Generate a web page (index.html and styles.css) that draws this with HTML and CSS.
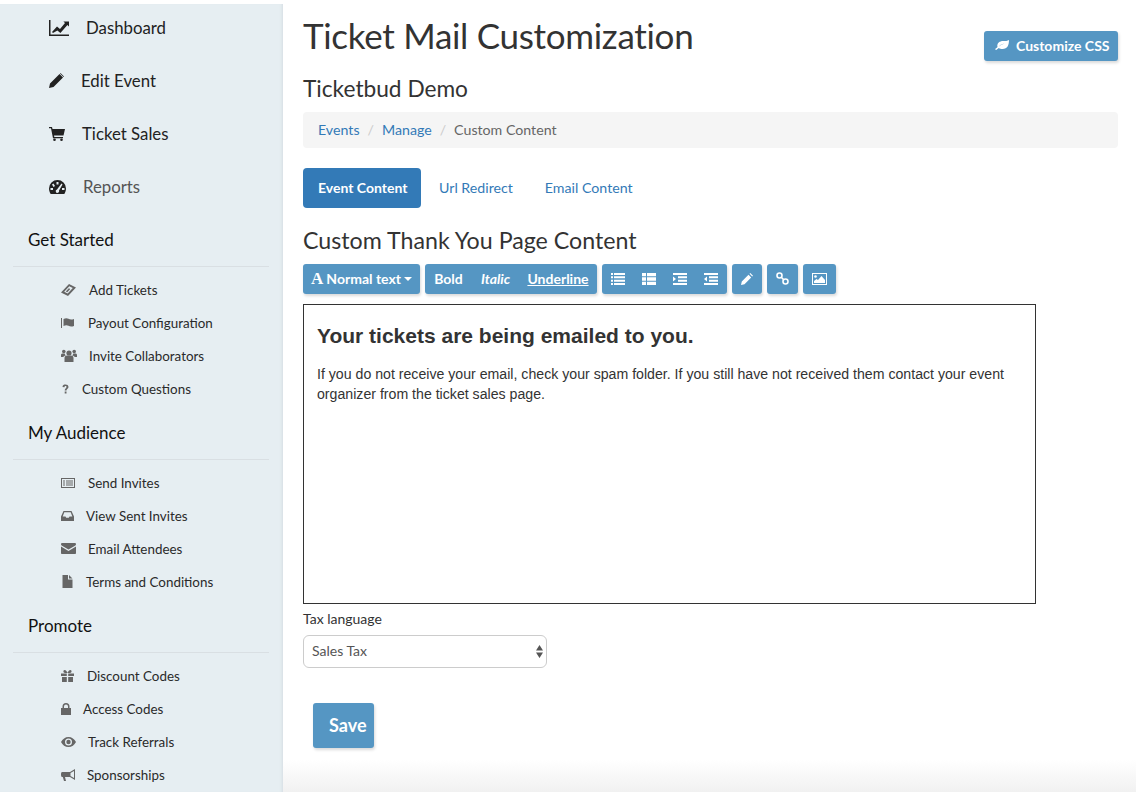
FILE: index.html
```html
<!DOCTYPE html>
<html lang="en">
<head>
<meta charset="utf-8">
<title>Ticket Mail Customization</title>
<link rel="stylesheet" href="styles.css">
</head>
<body>
<div class="page">
  <aside class="sidebar">
    <nav class="main-nav">
      <a class="main-item"><svg class="ico" width="20" height="16" viewBox="0 0 20 16"><path d="M0 0h1.500v14.500H20V16H0z"/><path d="M3 12l5-5.500 3 2.500 5-6-1.600-1.500H20v5l-1.600-1.600-7 8-3-2.500L4 13z"/></svg><span>Dashboard</span></a>
      <a class="main-item"><svg class="ico" width="15" height="15" viewBox="0 0 15 15"><path d="M0 15l1-4.500L10.500 1l3.500 3.500L4.500 14zM11.500 0l3.500 3.500-.5.500L11 .500z"/></svg><span>Edit Event</span></a>
      <a class="main-item"><svg class="ico" width="16" height="14" viewBox="0 0 16 14"><path d="M0 0h3l.5 2H16l-1.500 6.500H5l.3 1.500H14v1.200H4L2 1.300H0z"/><circle cx="5.500" cy="12.700" r="1.300"/><circle cx="12.500" cy="12.700" r="1.300"/></svg><span>Ticket Sales</span></a>
      <a class="main-item muted"><svg class="ico" width="17" height="14" viewBox="0 0 17 14"><path fill-rule="evenodd" d="M8.500 0A8.500 8.500 0 0 1 17 8.500c0 2-.6 3.800-1.700 5.500H1.700C.6 12.300 0 10.500 0 8.500A8.500 8.500 0 0 1 8.500 0zM7.500 2v2.500h2V2zM3 4.500L4.500 7 6 6 4.500 3.500zM12.500 3.500L8 9.500a1.700 1.700 0 1 0 2 1l3.500-6zM1.500 8v2h2.500V8zM13 8v2h2.500V8z"/></svg><span>Reports</span></a>
    </nav>

    <h4 class="section-title">Get Started</h4>
    <ul class="sub-nav">
      <li><svg class="ico" width="15" height="12" viewBox="0 0 15 12"><path fill-rule="evenodd" d="M8 0l7 3.500-8 8.500-7-3.500zM8.300 2.200L3.200 7.700l3.500 1.800 5.100-5.500z"/><path d="M7.800 4.200l1.500.8-3 3.200-1.500-.8z"/></svg><span>Add Tickets</span></li>
      <li><svg class="ico" width="15" height="10" viewBox="0 0 15 10"><path d="M0 0h1v10H0zM2.500 1c2-1 3.500-1 5-.2s3 1 5.500.2v7c-2.500.8-4 .6-5.500-.2s-3-.8-5 .2z"/></svg><span>Payout Configuration</span></li>
      <li><svg class="ico" width="16" height="13" viewBox="0 0 16 13"><circle cx="8" cy="4" r="2.600"/><circle cx="2.800" cy="2.500" r="1.800"/><circle cx="13.200" cy="2.500" r="1.800"/><path d="M3.500 13V9c0-1.800 1.500-2.500 2.500-2.500h4c1 0 2.500.7 2.500 2.500v4zM0 8V6c0-1 .8-1.500 1.500-1.500h2.300c.1 1 .6 1.500 1 2-1.500.3-2.300 1-2.500 1.500zM16 8V6c0-1-.8-1.500-1.500-1.500h-2.300c-.1 1-.6 1.500-1 2 1.500.3 2.300 1 2.500 1.500z"/></svg><span>Invite Collaborators</span></li>
      <li><svg class="ico" width="9" height="10" viewBox="0 0 9 10"><path d="M1.500 3C1.500 1 3 .5 4.500.5S7.500 1.300 7.500 3c0 1.500-2 2-2 3.500H3.700C3.700 4.500 5.500 4 5.500 3c0-.5-.4-.9-1-.9s-1 .4-1 1.200zM3.700 7.500h1.800v2H3.700z"/></svg><span>Custom Questions</span></li>
    </ul>

    <h4 class="section-title">My Audience</h4>
    <ul class="sub-nav">
      <li><svg class="ico" width="14" height="10" viewBox="0 0 14 10"><path fill-rule="evenodd" d="M0 0h14v10H0zM1 1v8h12V1zM2 2.500h2v1H2zM5 2.500h7v1H5zM2 4.500h2v1H2zM5 4.500h7v1H5zM2 6.500h2v1H2zM5 6.500h7v1H5z"/></svg><span>Send Invites</span></li>
      <li><svg class="ico" width="13" height="10" viewBox="0 0 13 10"><path fill-rule="evenodd" d="M2.500 0h8L13 5.500V10H0V5.500zM3.300 1.200L1.700 5.500h2.800l.7 1.200h2.600l.7-1.200h2.800L9.700 1.200z"/></svg><span>View Sent Invites</span></li>
      <li><svg class="ico" width="15" height="11" viewBox="0 0 15 11"><path d="M1.200 0h12.600c.6 0 1.200.5 1.200 1.200 0 .6-.5 1.200-1 1.500L7.500 6.500 1 2.700C.500 2.400 0 1.800 0 1.200 0 .5.600 0 1.200 0zM0 3.500l7.500 4.500L15 3.500V10c0 .6-.5 1-1 1H1c-.5 0-1-.4-1-1z"/></svg><span>Email Attendees</span></li>
      <li><svg class="ico" width="13" height="13" viewBox="0 0 13 13"><path d="M1.500 0H7v4.500h4.500V13h-10zM8 0l3.500 3.500H8z"/></svg><span>Terms and Conditions</span></li>
    </ul>

    <h4 class="section-title">Promote</h4>
    <ul class="sub-nav">
      <li><svg class="ico" width="13" height="12" viewBox="0 0 13 12"><path d="M0 3.500h5.800V6H0zM7.200 3.500H13V6H7.200zM1 7h4.800v5H1zM7.200 7H12v5H7.200zM3.500 0C5 0 6 1.500 6.500 3 7 1.500 8 0 9.500 0 11 0 11 3 9 3H4C2 3 2 0 3.500 0z"/></svg><span>Discount Codes</span></li>
      <li><svg class="ico" width="10" height="12" viewBox="0 0 10 12"><path fill-rule="evenodd" d="M0 5h1.500V3.500a3.500 3.500 0 0 1 7 0V5H10v7H0zM3 5h4V3.500a2 2 0 0 0-4 0z"/></svg><span>Access Codes</span></li>
      <li><svg class="ico" width="15" height="10" viewBox="0 0 15 10"><path fill-rule="evenodd" d="M7.500 0c3.200 0 6 2 7.500 5-1.500 3-4.300 5-7.500 5S1.500 8 0 5c1.500-3 4.300-5 7.500-5zM7.500 1.500a3.500 3.500 0 1 0 0 7 3.500 3.500 0 0 0 0-7z"/><circle cx="7.500" cy="5" r="2.200"/></svg><span>Track Referrals</span></li>
      <li><svg class="ico" width="14" height="12" viewBox="0 0 14 12"><path fill-rule="evenodd" d="M14 0v11L9 8H4l1 4H3L1.800 8H1C.4 8 0 7 0 5.500S.4 3 1 3h8zM13 2L9.500 4v3l3.500 2z"/></svg><span>Sponsorships</span></li>
    </ul>
  </aside>

  <main class="content">
    <header class="page-head">
      <h1>Ticket Mail Customization</h1>
      <a class="btn btn-css"><svg width="14" height="10" viewBox="0 0 14 10"><path fill="#fff" fill-rule="evenodd" d="M14 0c0 5-1.500 9-6.500 9-1.500 0-2.800-.3-3.700-1C3 8.500 2 9.300 1.200 10L0 9.300C1 8.300 2 7.500 2.500 7 1.500 3 5 1 8 1c2.500 0 4.500 0 6-1zM3.800 6.700C5.300 5.300 7 4.300 9.500 3.500 7 3.800 5 5 3.800 6.700z"/></svg>Customize CSS</a>
    </header>
    <h2 class="sub-head">Ticketbud Demo</h2>

    <ol class="breadcrumb">
      <li><a>Events</a></li>
      <li class="sep">/</li>
      <li><a>Manage</a></li>
      <li class="sep">/</li>
      <li class="current">Custom Content</li>
    </ol>

    <div class="tabs">
      <a class="tab active">Event Content</a>
      <a class="tab">Url Redirect</a>
      <a class="tab">Email Content</a>
    </div>

    <h3 class="section-head">Custom Thank You Page Content</h3>

    <div class="toolbar">
      <div class="tool-group"><a class="tool tool-style"><span class="serif-a">A</span> Normal text<span class="caret"></span></a></div>
      <div class="tool-group">
        <a class="tool tool-bold">Bold</a>
        <a class="tool tool-italic">Italic</a>
        <a class="tool tool-under">Underline</a>
      </div>
      <div class="tool-group">
        <a class="tool tool-ico"><svg width="14" height="12" viewBox="0 0 14 12"><path fill="#fff" d="M0 0h2v2H0zM3 0h11v2H3zM0 3.300h2v2H0zM3 3.300h11v2H3zM0 6.700h2v2H0zM3 6.700h11v2H3zM0 10h2v2H0zM3 10h11v2H3z"/></svg></a>
        <a class="tool tool-ico"><svg width="14" height="12" viewBox="0 0 14 12"><path fill="#fff" d="M0 0h4v3.300H0zM5 0h9v3.300H5zM0 4.300h4v3.400H0zM5 4.300h9v3.400H5zM0 8.700h4V12H0zM5 8.700h9V12H5z"/></svg></a>
        <a class="tool tool-ico"><svg width="14" height="12" viewBox="0 0 14 12"><path fill="#fff" d="M0 0h14v2H0zM5 3.300h9v2H5zM5 6.700h9v2H5zM0 10h14v2H0zM0 3.500L3 6 0 8.500z"/></svg></a>
        <a class="tool tool-ico"><svg width="14" height="12" viewBox="0 0 14 12"><path fill="#fff" d="M0 0h14v2H0zM5 3.300h9v2H5zM5 6.700h9v2H5zM0 10h14v2H0zM3 3.500L0 6l3 2.500z"/></svg></a>
      </div>
      <div class="tool-group"><a class="tool tool-solo"><svg width="12" height="12" viewBox="0 0 12 12"><path fill="#fff" d="M0 12l.8-3.500L7.500 1.800l2.700 2.700L3.500 11.200zM8.500.8l.8-.8L12 2.700l-.8.800z"/></svg></a></div>
      <div class="tool-group"><a class="tool tool-solo tool-link"><svg width="13" height="13" viewBox="0 0 13 13"><g fill="none" stroke="#fff" stroke-width="1.600"><circle cx="3.500" cy="3.500" r="2.500"/><circle cx="9.500" cy="9.500" r="2.500"/><path d="M5.500 5.500l2 2"/></g></svg></a></div>
      <div class="tool-group"><a class="tool tool-solo tool-img"><svg width="15" height="12" viewBox="0 0 15 12"><path fill="#fff" fill-rule="evenodd" d="M0 0h15v12H0zM1 1v10h13V1z"/><circle fill="#fff" cx="3.500" cy="3.500" r="1.300"/><path fill="#fff" d="M2 10V8l2.500-2 1.500 1 3.500-4 3.500 4v3z"/></svg></a></div>
    </div>

    <div class="editor">
      <h2>Your tickets are being emailed to you.</h2>
      <p>If you do not receive your email, check your spam folder. If you still have not received them contact your event organizer from the ticket sales page.</p>
    </div>

    <label class="field-label" for="tax">Tax language</label>
    <div class="select-wrap">
      <select class="field-select" id="tax"><option>Sales Tax</option></select>
      <svg class="select-arrows" width="7" height="13" viewBox="0 0 7 13"><path fill="#555" d="M3.500 0L7 5.500H0zM0 7.500h7L3.500 13z"/></svg>
    </div>

    <a class="btn btn-save">Save</a>
  </main>
</div>
</body>
</html>
```
FILE: styles.css
```css
* { box-sizing: border-box; }
html, body { margin: 0; padding: 0; height: 100%; overflow: hidden; }
body {
  font-family: "Lato", "Liberation Sans", sans-serif;
  font-size: 14px;
  color: #333;
  background: #fff;
}
.page { display: flex; height: 792px; }

.sidebar {
  width: 283px;
  flex: none;
  margin-top: 4px;
  background: #e6eef2;
  box-shadow: inset -3px 0 3px -2px #d5dde2;
  padding: 0 14px 0 13px;
  color: #222;
  overflow: hidden;
}
.ico { flex: none; fill: currentColor; }

.main-nav { display: flex; flex-direction: column; padding-left: 36px; }
.main-item {
  display: flex;
  align-items: center;
  gap: 17px;
  height: 53px;
  padding-bottom: 2px;
  font-size: 16.800px;
  color: #222;
}
.main-item:first-child { margin-top: -2px; }
.main-item .ico { color: #222; }
.main-item.muted { color: #555; }

.section-title {
  margin: 0 0 7px;
  height: 53px;
  padding: 16px 0 0 15px;
  font-size: 17px;
  line-height: 20px;
  font-weight: 400;
  color: #111;
  border-bottom: 1px solid #d9dfe3;
}
.sub-nav { list-style: none; margin: 0 0 1px; padding: 0 0 0 48px; }
.sub-nav li {
  display: flex;
  align-items: center;
  gap: 12px;
  height: 33px;
  padding-bottom: 2px;
  font-size: 13.400px;
  color: #2a2a2a;
}
.sub-nav li:first-child .ico { margin-right: 1px; }
.sub-nav .ico { color: #666; }

.content {
  flex: 1;
  padding: 0 18px 0 20px;
  background: linear-gradient(to bottom, #fff 0, #fff 760px, #f1f1f1 792px);
}
.page-head {
  display: flex;
  justify-content: space-between;
  align-items: flex-start;
  height: 72px;
}
h1 {
  margin: 15px 0 0;
  font-family: "Lato", sans-serif;
  font-size: 35px;
  line-height: 40px;
  font-weight: 400;
  letter-spacing: -.3px;
  color: #333;
}
.sub-head {
  margin: 0;
  font-family: "Lato", sans-serif;
  font-size: 22.700px;
  line-height: 34px;
  font-weight: 400;
  color: #333;
}
.btn {
  display: inline-flex;
  align-items: center;
  background: #5596c3;
  color: #fff;
  border-radius: 3px;
  box-shadow: 1px 2px 3px rgba(0, 0, 0, .15);
  font-weight: 700;
}
.btn-css {
  margin-top: 31px;
  height: 30px;
  width: 134px;
  justify-content: flex-start;
  padding: 0 0 2px 11px;
  gap: 7px;
  font-size: 14px;
}

.breadcrumb {
  display: flex;
  align-items: center;
  gap: 8px;
  list-style: none;
  margin: 6px 0 20px;
  padding: 0 15px 2px;
  height: 36px;
  background: #f5f5f5;
  border-radius: 4px;
  font-size: 14.200px;
}
.breadcrumb a { color: #337ab7; }
.breadcrumb .sep { color: #ccc; }
.breadcrumb .current { color: #666; }

.tabs { display: flex; height: 40px; }
.tab {
  display: flex;
  align-items: center;
  padding: 0 16px 2px;
  border-radius: 4px;
  font-size: 14.200px;
  color: #337ab7;
}
.tab.active { background: #337ab7; color: #fff; font-weight: 700; font-size: 14px; width: 118px; padding: 0 0 2px 15px; margin-right: 2px; }

.section-head {
  margin: 19px 0 11px;
  font-family: "Lato", sans-serif;
  font-size: 23.200px;
  line-height: 26px;
  font-weight: 400;
  color: #333;
}

.toolbar { display: flex; gap: 5px; height: 30px; }
.tool-group {
  display: flex;
  background: #5596c3;
  border-radius: 3px;
  box-shadow: 1px 2px 3px rgba(0, 0, 0, .15);
}
.tool {
  display: flex;
  align-items: center;
  justify-content: center;
  padding-bottom: 1px;
  color: #fff;
  font-size: 14px;
}
.tool-style { width: 117px; font-weight: 700; }
.serif-a { font-family: "Liberation Serif", serif; font-size: 17px; margin-right: 3px; font-weight: 700; }
.caret {
  margin-left: 3px;
  border-top: 4px solid #fff;
  border-left: 4px solid transparent;
  border-right: 4px solid transparent;
}
.tool-bold { width: 47px; font-weight: 700; }
.tool-italic { width: 47px; font-style: italic; font-weight: 700; }
.tool-under { width: 78px; font-weight: 700; text-decoration: underline; }
.tool-ico { width: 31.250px; }
.tool-solo { width: 30px; }
.tool-link { width: 31px; }
.tool-img { width: 33px; }

.editor {
  width: 733px;
  height: 300px;
  margin-top: 10px;
  border: 1px solid #333;
  padding: 13px;
  font-family: "Liberation Sans", Arial, sans-serif;
  color: #333;
}
.editor h2 { margin: 7px 0 17px; font-size: 21px; line-height: 22px; font-weight: 700; }
.editor p { margin: 0; font-size: 14.150px; line-height: 20px; }

.field-label { display: block; margin-top: 6px; height: 25px; line-height: 18px; font-size: 14px; color: #333; }
.select-wrap { position: relative; width: 244px; }
.field-select {
  display: block;
  width: 100%;
  height: 33px;
  padding: 0 3px 2px 8px;
  appearance: none;
  font-family: "Lato", sans-serif;
  font-size: 14px;
  color: #555;
  background: #fff;
  border: 1px solid #ccc;
  border-radius: 6px;
}
.select-arrows { position: absolute; top: 10px; right: 4px; }
.btn-save {
  display: flex;
  justify-content: flex-start;
  width: 61px;
  height: 45px;
  margin: 35px 0 0 10px;
  padding: 0 0 2px 16px;
  font-size: 18px;
}
```
